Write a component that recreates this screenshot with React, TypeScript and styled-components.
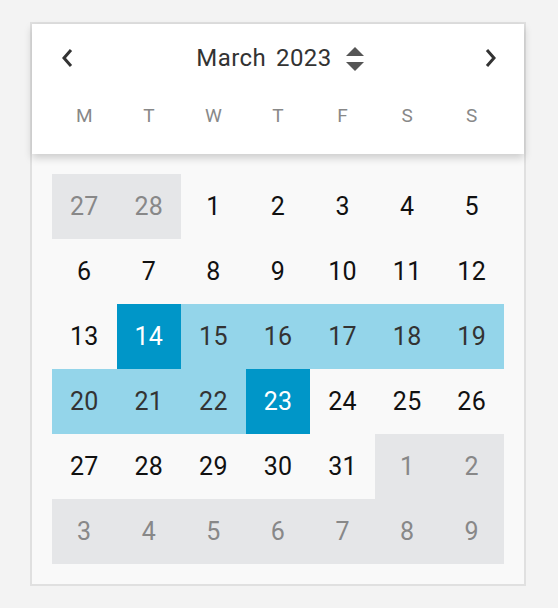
import React from "react";
import styled, { createGlobalStyle } from "styled-components";

const GlobalStyle = createGlobalStyle`
  html, body {
    margin: 0;
    padding: 0;
    background: #f3f3f3;
    font-family: Roboto, "Noto Sans", sans-serif;
  }
`;

type Kind = "normal" | "faded" | "range" | "selected";

interface Day {
  label: number;
  kind: Kind;
}

// March 2023, Monday first, with spill-over days from Feb and April
const buildDays = (): Day[] => {
  const days: Day[] = [];
  days.push({ label: 27, kind: "faded" }, { label: 28, kind: "faded" });
  for (let d = 1; d <= 31; d++) {
    let kind: Kind = "normal";
    if (d === 14 || d === 23) kind = "selected";
    else if (d > 14 && d < 23) kind = "range";
    days.push({ label: d, kind });
  }
  for (let d = 1; d <= 9; d++) days.push({ label: d, kind: "faded" });
  return days;
};

const WEEKDAYS = ["M", "T", "W", "T", "F", "S", "S"];

const Page = styled.div`
  padding: 22px 0 0 30px;
`;

const Card = styled.div`
  width: 492px;
  border: 2px solid #e0e0e0;
  background: #f9f9f9;
`;

const Header = styled.div`
  position: relative;
  z-index: 1;
  height: 130px;
  background: #fff;
  box-shadow: 0 4px 8px rgba(0, 0, 0, 0.18);
  display: flex;
  flex-direction: column;
`;

const TopBar = styled.div`
  height: 68px;
  padding: 0 22px 0 24px;
  display: flex;
  align-items: center;
  justify-content: space-between;
`;

const NavButton = styled.button`
  width: 24px;
  height: 24px;
  padding: 0;
  border: none;
  background: transparent;
  display: flex;
  align-items: center;
  justify-content: center;
  cursor: pointer;
  color: #333;
`;

const MonthLabel = styled.div`
  display: flex;
  align-items: center;
  font-size: 24px;
  color: #333;
  letter-spacing: 0.4px;
  margin-left: 2px;
`;

const Word = styled.span`
  margin-right: 10px;
`;

const Spinner = styled.span`
  display: flex;
  margin-left: 14px;
  margin-top: 1px;
`;

const WeekRow = styled.div`
  padding: 0 20px;
  display: grid;
  grid-template-columns: repeat(7, 1fr);
  margin-top: 12px;
`;

const WeekDay = styled.div`
  text-align: center;
  font-size: 19px;
  color: #888;
`;

const Body = styled.div`
  padding: 20px;
`;

const Grid = styled.div`
  display: grid;
  grid-template-columns: repeat(7, 1fr);
  grid-auto-rows: 65px;
`;

const palette: Record<Kind, { bg: string; fg: string }> = {
  normal: { bg: "transparent", fg: "#111" },
  faded: { bg: "#e5e6e8", fg: "#888" },
  range: { bg: "#94d5ea", fg: "#333" },
  selected: { bg: "#0096c8", fg: "#fff" },
};

const Cell = styled.div<{ $kind: Kind }>`
  display: flex;
  align-items: center;
  justify-content: center;
  font-size: 25px;
  letter-spacing: 0.3px;
  background: ${(p) => palette[p.$kind].bg};
  color: ${(p) => palette[p.$kind].fg};
`;

const Chevron = ({ dir }: { dir: "left" | "right" }) => (
  <svg width="14" height="20" viewBox="0 0 14 20">
    <path
      d={dir === "left" ? "M10 2 L3 10 L10 18" : "M4 2 L11 10 L4 18"}
      fill="none"
      stroke="currentColor"
      strokeWidth="3"
    />
  </svg>
);

const UpDown = () => (
  <svg width="18" height="26" viewBox="0 0 18 26">
    <path d="M9 1 L18 10 L0 10 Z" fill="#555" />
    <path d="M0 16 L18 16 L9 25 Z" fill="#555" />
  </svg>
);

export default function App() {
  const days = buildDays();
  return (
    <>
      <GlobalStyle />
      <Page>
        <Card>
          <Header>
            <TopBar>
              <NavButton aria-label="previous month">
                <Chevron dir="left" />
              </NavButton>
              <MonthLabel>
                <Word>March</Word>
                <span>2023</span>
                <Spinner>
                  <UpDown />
                </Spinner>
              </MonthLabel>
              <NavButton aria-label="next month">
                <Chevron dir="right" />
              </NavButton>
            </TopBar>
            <WeekRow>
              {WEEKDAYS.map((w, i) => (
                <WeekDay key={i}>{w}</WeekDay>
              ))}
            </WeekRow>
          </Header>
          <Body>
            <Grid>
              {days.map((d, i) => (
                <Cell key={i} $kind={d.kind}>
                  {d.label}
                </Cell>
              ))}
            </Grid>
          </Body>
        </Card>
      </Page>
    </>
  );
}
